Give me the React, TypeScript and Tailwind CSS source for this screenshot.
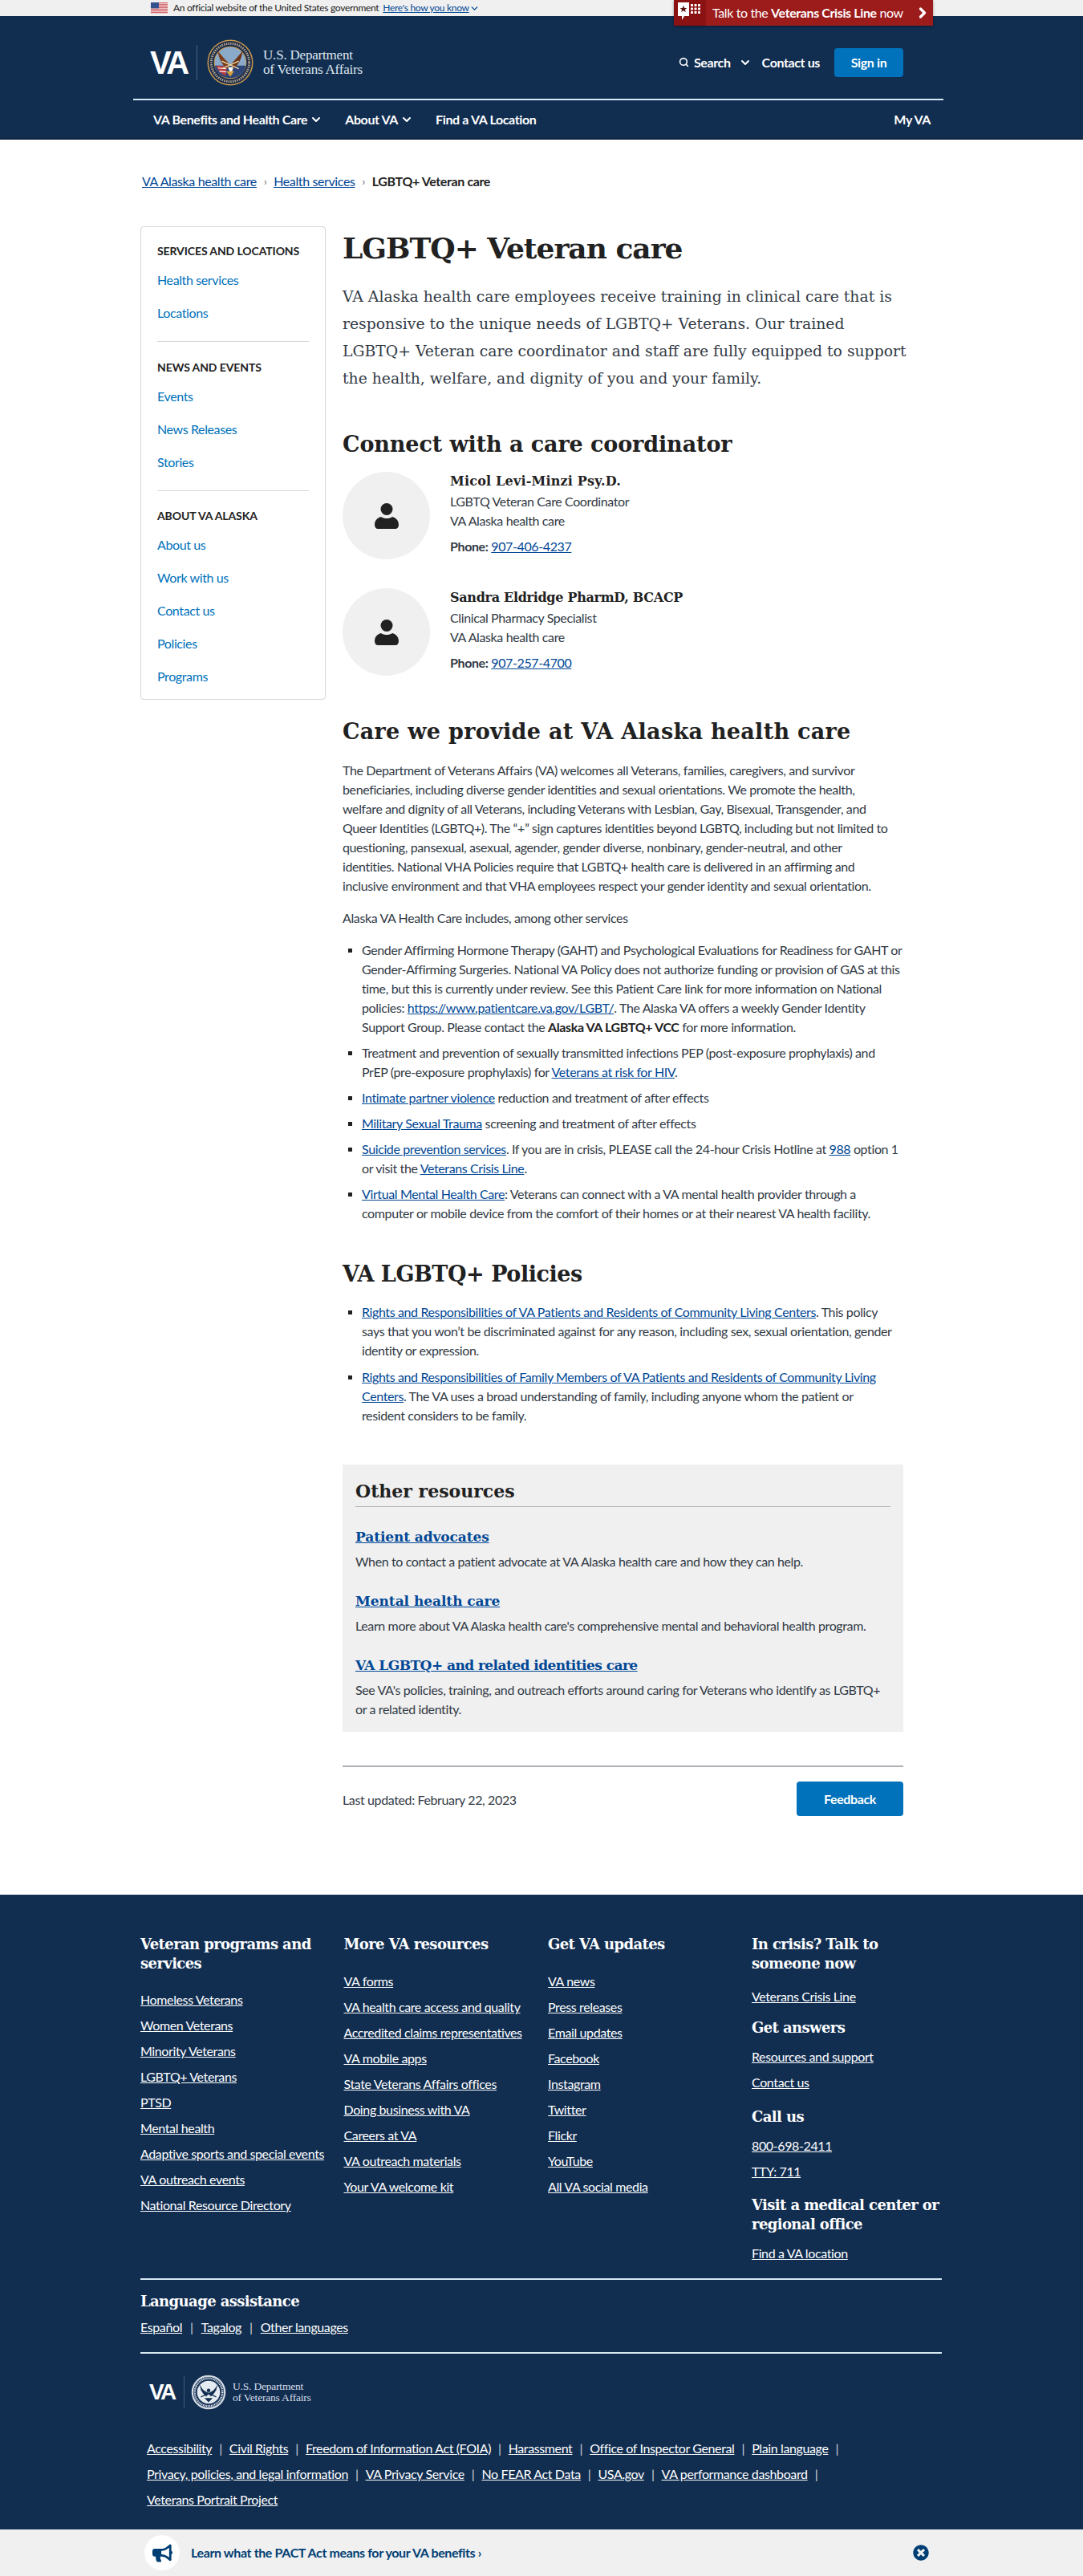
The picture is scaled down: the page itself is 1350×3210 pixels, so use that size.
import React from "react";
import { ChevronDown, ChevronRight, Search } from "lucide-react";
import { FaBullhorn, FaTimesCircle } from "react-icons/fa";

const A = ({ children, href = "#" }: { children: React.ReactNode; href?: string }) => (
  <a href={href} className="text-[#004795] underline">{children}</a>
);

const Flag = () => (
  <svg width="21" height="14" viewBox="0 0 21 14">
    <rect width="21" height="14" fill="#fff" />
    {[0, 2, 4, 6, 8, 10, 12].map((y) => (
      <rect key={y} y={y + 0.2} width="21" height="1.1" fill="#c8434a" />
    ))}
    <rect width="10" height="7.4" fill="#34508f" />
  </svg>
);

const Seal = ({ size, mono }: { size: number; mono?: boolean }) =>
  mono ? (
    <svg width={size} height={size} viewBox="0 0 60 60">
      <circle cx="30" cy="30" r="29" fill="#d4dbe4" />
      <circle cx="30" cy="30" r="26" fill="#112e51" />
      <circle cx="30" cy="30" r="23.5" fill="none" stroke="#dfe5ec" strokeWidth="3.4" strokeDasharray="1.6 1.2" />
      <circle cx="30" cy="30" r="19.5" fill="#e6ebf1" />
      <path d="M30 33C24 30 19 25 15 17c1 8 4 15 11 20zM30 33c6-3 11-8 15-16-1 8-4 15-11 20z" fill="#112e51" />
      <path d="M17 38l26-12M43 38L17 26" stroke="#112e51" strokeWidth="1.6" />
      <path d="M23 40h14l-7 7z" fill="#112e51" />
      <circle cx="30" cy="27" r="3" fill="#112e51" />
    </svg>
  ) : (
    <svg width={size} height={size} viewBox="0 0 60 60">
      <circle cx="30" cy="30" r="29.5" fill="#c99a4b" />
      <circle cx="30" cy="30" r="28" fill="#1c2c4c" />
      <circle cx="30" cy="30" r="24.5" fill="none" stroke="#b9a98c" strokeWidth="3" strokeDasharray="1.5 1.3" />
      <circle cx="30" cy="30" r="21" fill="#c99a4b" />
      <circle cx="30" cy="30" r="20" fill="#8ba9c9" />
      <path d="M10 34h40c-1 10-9 16-20 16s-19-6-20-16z" fill="#2e4677" />
      <path d="M12 34l14 1-2 12c-6-2-10-7-12-13z" fill="#b9383d" />
      <path d="M14 37l11 1M16 41l9 1" stroke="#fff" strokeWidth="1.2" />
      <path d="M30 33C25 28 20 22 14 15c1 9 5 18 12 23z" fill="#7c3f1d" />
      <path d="M30 33c5-5 10-11 16-18-1 9-5 18-12 23z" fill="#6d3518" />
      <path d="M19 38l22-10M41 38L19 28" stroke="#e8d9a8" strokeWidth="1.4" />
      <path d="M27 36h7l-3 9z" fill="#fff" />
      <path d="M25 41h10l-5 7z" fill="#d9a13b" />
    </svg>
  );

const Logo = ({ small }: { small?: boolean }) =>
  small ? (
    <div className="flex items-center h-[44px] ml-[11px] font-normal">
      <span className="text-white font-['Liberation_Sans',sans-serif] font-bold text-[28px] tracking-[-2.5px] leading-none w-[43px]">VA</span>
      <span className="w-px h-[40px] bg-[#3d5677]" />
      <span className="ml-[8px]"><Seal size={44} mono /></span>
      <span className="ml-[8px] text-[#d8dfe8] font-['Liberation_Serif',serif] text-[13.5px] leading-[14px] tracking-[-0.2px]">U.S. Department<br />of Veterans Affairs</span>
    </div>
  ) : (
    <div className="flex items-center h-[60px] font-normal">
      <span className="text-white font-['Liberation_Sans',sans-serif] font-bold text-[40px] tracking-[-3.5px] leading-none w-[58px]">VA</span>
      <span className="w-px h-[44px] bg-[#46607f]" />
      <span className="ml-[12px]"><Seal size={58} /></span>
      <span className="ml-[12px] text-[#dfe6ee] font-['Liberation_Serif',serif] text-[17px] leading-[18px] tracking-[-0.2px]">U.S. Department<br />of Veterans Affairs</span>
    </div>
  );

const SideHead = ({ children, mt }: { children: React.ReactNode; mt: string }) => (
  <div className={`${mt} h-[20px] leading-[20px] text-[14px] tracking-[-0.1px] font-bold uppercase text-[#212121] mb-[5px]`}>{children}</div>
);
const SideLink = ({ children }: { children: React.ReactNode }) => (
  <a href="#" className="block h-[41px] leading-[41px] text-[#0071bb]">{children}</a>
);

const Person = () => (
  <div className="w-[109px] h-[109px] rounded-full bg-[#f0f0f0] flex items-center justify-center shrink-0">
    <svg width="30" height="32" viewBox="0 0 30 32" fill="#212121">
      <circle cx="15" cy="7.5" r="7.5" />
      <path d="M0 27c0-6 4-9 8-10 2 1.400 4.500 2 7 2s5-.6 7-2c4 1 8 4 8 10 0 3-2 5-4 5H4c-2 0-4-2-4-5z" />
    </svg>
  </div>
);

const H = "font-['DejaVu_Serif',serif]";

const Contact = ({ name, role, phone, mt, nameTrack }: { name: string; role: string; phone: string; mt?: string; nameTrack: string }) => (
  <div className={`flex ${mt ?? ""}`}>
    <Person />
    <div className="ml-[25px] leading-[24px]">
      <div className={`${H} ${nameTrack} font-bold text-[16px] text-[#212121]`}>{name}</div>
      <div className="mt-px">{role}</div>
      <div>VA Alaska health care</div>
      <div className="mt-[8px]"><b>Phone:</b> <A>{phone}</A></div>
    </div>
  </div>
);

const Li = ({ children, mt = "mt-[8px]" }: { children: React.ReactNode; mt?: string }) => (
  <li className={`${mt} relative pl-[24px] whitespace-nowrap`}>
    <span className="absolute left-[7px] top-[10px] w-[5px] h-[5px] bg-[#212121]" />
    {children}
  </li>
);

const FootLink = ({ children }: { children: React.ReactNode }) => (
  <div className="h-[32px] leading-[32px]"><a href="#" className="text-white underline">{children}</a></div>
);
const FootHead = ({ children, mt = "" }: { children: React.ReactNode; mt?: string }) => (
  <div className={`${H} ${mt} text-white font-bold text-[18px] tracking-[-0.6px] leading-[24px] whitespace-pre`}>{children}</div>
);

const Sep = ({ wide }: { wide?: boolean }) => <span className={`${wide ? "mx-[10px]" : "mx-[9px]"} text-[#d6d7d9]`}>|</span>;

const Resource = ({ title, track, children }: { title: string; track: string; children: React.ReactNode }) => (
  <div className="mt-[25px]">
    <a href="#" className={`${H} ${track} block font-bold text-[17px] leading-[24px] text-[#004795] underline`}>{title}</a>
    <div className="mt-[7px] whitespace-nowrap">{children}</div>
  </div>
);

export default function App() {
  const col1 = ["Homeless Veterans", "Women Veterans", "Minority Veterans", "LGBTQ+ Veterans", "PTSD", "Mental health", "Adaptive sports and special events", "VA outreach events", "National Resource Directory"];
  const col2 = ["VA forms", "VA health care access and quality", "Accredited claims representatives", "VA mobile apps", "State Veterans Affairs offices", "Doing business with VA", "Careers at VA", "VA outreach materials", "Your VA welcome kit"];
  const col3 = ["VA news", "Press releases", "Email updates", "Facebook", "Instagram", "Twitter", "Flickr", "YouTube", "All VA social media"];
  return (
    <div className="w-[1350px] h-[3210px] overflow-hidden bg-white text-[#323a45] font-['Lato',sans-serif] text-[16px] tracking-[-0.38px] leading-[24px] relative">
      {/* official banner */}
      <div className="h-[20px] bg-[#f0f0f0] flex items-center pl-[188px] text-[12px] tracking-[-0.3px] leading-[20px] text-[#212121]">
        <Flag />
        <span className="ml-[7px]">An official website of the United States government</span>
        <a href="#" className="ml-[5px] text-[#004795] underline">Here's how you know</a>
        <ChevronDown size={13} strokeWidth={2.5} className="text-[#004795]" />
      </div>
      {/* crisis line, overlapping banner and header */}
      <a href="#" className="absolute left-[840px] top-0 w-[323px] h-[32px] bg-[#9c1c1c] flex items-center text-white shadow-[0_1px_3px_rgba(0,0,0,.4)] z-10">
        <span className="w-[40px] h-full bg-[#8b1212] flex items-center justify-center">
          <svg width="30" height="26" viewBox="0 0 30 26">
            <path d="M0 0h14v17H8l-3 5v-5H0z" fill="#fff" />
            <path d="M7 4l1.300 3h3l-2.400 2 1 3L7 10.200 4.100 12l1-3L2.700 7h3z" fill="#5b0e10" />
            {[16, 20.5, 25].map((x) => [2, 6.5, 11].map((y) => <rect key={`${x}-${y}`} x={x} y={y} width="3" height="3" rx=".6" fill="#fff" />))}
          </svg>
        </span>
        <span className="ml-[8px] whitespace-nowrap">Talk to the <b>Veterans Crisis Line</b> now</span>
        <ChevronRight size={20} strokeWidth={4} className="ml-[14px]" />
      </a>

      {/* header */}
      <header className="h-[154px] bg-[#112e51] border-b-[2px] border-[#0b2440] text-white font-bold">
        <div className="h-[103px] flex items-center pl-[187px] pr-[224px] pt-[12px]">
          <Logo />
          <div className="ml-auto flex items-center">
            <Search size={13} strokeWidth={3} />
            <span className="ml-[6px]">Search</span>
            <ChevronDown size={16} strokeWidth={3} className="ml-[10px]" />
            <span className="ml-[13px]">Contact us</span>
            <span className="ml-[18px] w-[86px] h-[36px] rounded-[4px] bg-[#0071bb] flex items-center justify-center">Sign in</span>
          </div>
        </div>
        <div className="ml-[166px] w-[1010px] h-[2px] bg-[#d7e9f3]" />
        <nav className="ml-[166px] w-[1010px] h-[47px] flex items-center pl-[25px] pr-[16px]">
          <span>VA Benefits and Health Care</span>
          <ChevronDown size={16} strokeWidth={3} className="ml-[3px]" />
          <span className="ml-[28px]">About VA</span>
          <ChevronDown size={16} strokeWidth={3} className="ml-[3px]" />
          <span className="ml-[28px]">Find a VA Location</span>
          <span className="ml-auto">My VA</span>
        </nav>
      </header>

      {/* breadcrumb */}
      <div className="ml-[177px] mt-[42px] h-[20px] leading-[20px] flex items-center">
        <A>VA Alaska health care</A>
        <span className="mx-[9px] text-[#5b616b] text-[13px]">›</span>
        <A>Health services</A>
        <span className="mx-[9px] text-[#5b616b] text-[13px]">›</span>
        <b className="text-[#212121]">LGBTQ+ Veteran care</b>
      </div>

      {/* main */}
      <div className="flex mt-[46px] ml-[175px]">
        <aside className="w-[231px] h-[590px] shrink-0 border border-[#d6d7d9] rounded-[4px] px-[20px] pt-[20px]">
          <SideHead mt="">Services and locations</SideHead>
          <SideLink>Health services</SideLink>
          <SideLink>Locations</SideLink>
          <div className="mt-[15px] h-px bg-[#d6d7d9]" />
          <SideHead mt="mt-[22px]">News and events</SideHead>
          <SideLink>Events</SideLink>
          <SideLink>News Releases</SideLink>
          <SideLink>Stories</SideLink>
          <div className="mt-[15px] h-px bg-[#d6d7d9]" />
          <SideHead mt="mt-[21px]">About VA Alaska</SideHead>
          <SideLink>About us</SideLink>
          <SideLink>Work with us</SideLink>
          <SideLink>Contact us</SideLink>
          <SideLink>Policies</SideLink>
          <SideLink>Programs</SideLink>
        </aside>

        <main className="ml-[21px] w-[699px] shrink-0">
          <h1 className={`${H} mt-[3px] font-bold text-[36px] tracking-[-1px] leading-[48px] text-[#212121]`}>LGBTQ+ Veteran care</h1>
          <p className={`${H} mt-[20px] text-[18.800px] tracking-normal leading-[34px] whitespace-nowrap`}>
            VA Alaska health care employees receive training in clinical care that is<br />
            responsive to the unique needs of LGBTQ+ Veterans. Our trained<br />
            LGBTQ+ Veteran care coordinator and staff are fully equipped to support<br />
            the health, welfare, and dignity of you and your family.
          </p>
          <h2 className={`${H} mt-[45px] font-bold text-[27px] tracking-[-0.1px] leading-[40px] text-[#212121]`}>Connect with a care coordinator</h2>
          <Contact mt="mt-[14px]" nameTrack="tracking-[0.2px]" name="Micol Levi-Minzi Psy.D." role="LGBTQ Veteran Care Coordinator" phone="907-406-4237" />
          <Contact mt="mt-[36px]" nameTrack="tracking-[-0.3px]" name="Sandra Eldridge PharmD, BCACP" role="Clinical Pharmacy Specialist" phone="907-257-4700" />

          <h2 className={`${H} mt-[50px] font-bold text-[27px] tracking-[0.3px] leading-[40px] text-[#212121]`}>Care we provide at VA Alaska health care</h2>
          <p className="mt-[16px] whitespace-nowrap">
            The Department of Veterans Affairs (VA) welcomes all Veterans, families, caregivers, and survivor<br />
            beneficiaries, including diverse gender identities and sexual orientations. We promote the health,<br />
            welfare and dignity of all Veterans, including Veterans with Lesbian, Gay, Bisexual, Transgender, and<br />
            Queer Identities (LGBTQ+).  The “+” sign captures identities beyond LGBTQ, including but not limited to<br />
            questioning, pansexual, asexual, agender, gender diverse, nonbinary, gender-neutral, and other<br />
            identities.  National VHA Policies require that LGBTQ+ health care is delivered in an affirming and<br />
            inclusive environment and that VHA employees respect your gender identity and sexual orientation.
          </p>
          <p className="mt-[16px]">Alaska VA Health Care includes, among other services</p>
          <ul className="mt-[16px]">
            <Li mt="">
              Gender Affirming Hormone Therapy (GAHT) and Psychological Evaluations for Readiness for GAHT or<br />
              Gender-Affirming Surgeries. National VA Policy does not authorize funding or provision of GAS at this<br />
              time, but this is currently under review. See this Patient Care link for more information on National<br />
              policies: <A>https://www.patientcare.va.gov/LGBT/</A>.  The Alaska VA offers a weekly Gender Identity<br />
              Support Group. Please contact the <b className="text-[#212121]">Alaska VA LGBTQ+ VCC</b> for more information.
            </Li>
            <Li>
              Treatment and prevention of sexually transmitted infections PEP (post-exposure prophylaxis) and<br />
              PrEP (pre-exposure prophylaxis) for <A>Veterans at risk for HIV</A>.
            </Li>
            <Li><A>Intimate partner violence</A> reduction and treatment of after effects</Li>
            <Li><A>Military Sexual Trauma</A> screening and treatment of after effects</Li>
            <Li>
              <A>Suicide prevention services</A>. If you are in crisis, PLEASE call the 24-hour Crisis Hotline at <A>988</A> option 1<br />
              or visit the <A>Veterans Crisis Line</A>.
            </Li>
            <Li>
              <A>Virtual Mental Health Care</A>: Veterans can connect with a VA mental health provider through a<br />
              computer or mobile device from the comfort of their homes or at their nearest VA health facility.
            </Li>
          </ul>

          <h2 className={`${H} mt-[44px] font-bold text-[27px] tracking-[-0.45px] leading-[40px] text-[#212121]`}>VA LGBTQ+ Policies</h2>
          <ul className="mt-[15px]">
            <Li mt="">
              <A>Rights and Responsibilities of VA Patients and Residents of Community Living Centers</A>. This policy<br />
              says that you won’t be discriminated against for any reason, including sex, sexual orientation, gender<br />
              identity or expression.
            </Li>
            <Li mt="mt-[9px]">
              <A>Rights and Responsibilities of Family Members of VA Patients and Residents of Community Living</A><br />
              <A>Centers</A>. The VA uses a broad understanding of family, including anyone whom the patient or<br />
              resident considers to be family.
            </Li>
          </ul>

          <section className="mt-[49px] h-[333px] bg-[#f0f0f0] px-[16px] pt-[17px]">
            <h3 className={`${H} font-bold text-[22px] tracking-normal leading-[32px] text-[#212121] pb-[3px] border-b border-[#aeb0b5]`}>Other resources</h3>
            <Resource track="tracking-[-0.1px]" title="Patient advocates">When to contact a patient advocate at VA Alaska health care and how they can help.</Resource>
            <Resource track="tracking-[-0.05px]" title="Mental health care">Learn more about VA Alaska health care's comprehensive mental and behavioral health program.</Resource>
            <Resource track="tracking-[-0.55px]" title="VA LGBTQ+ and related identities care">See VA's policies, training, and outreach efforts around caring for Veterans who identify as LGBTQ+<br />or a related identity.</Resource>
          </section>

          <div className="mt-[42px] h-[2px] bg-[#aeb0b5]" />
          <div className="mt-[18px] flex items-center justify-between">
            <span className="mt-[3px]">Last updated: February 22, 2023</span>
            <button className="w-[133px] h-[43px] rounded-[4px] bg-[#0071bb] text-white font-bold">Feedback</button>
          </div>
        </main>
      </div>

      {/* footer */}
      <footer className="absolute left-0 right-0 top-[2361px] h-[791px] bg-[#112e51] text-white pl-[175px] pt-[50px]">
        <div className="w-[1000px] h-[428px] grid grid-cols-[253.500px_254.500px_254px_238px]">
          <div>
            <FootHead>{"Veteran programs and\nservices"}</FootHead>
            <div className="mt-[17px]">{col1.map((t) => <FootLink key={t}>{t}</FootLink>)}</div>
          </div>
          <div>
            <FootHead>More VA resources</FootHead>
            <div className="mt-[18px]">{col2.map((t) => <FootLink key={t}>{t}</FootLink>)}</div>
          </div>
          <div>
            <FootHead>Get VA updates</FootHead>
            <div className="mt-[18px]">{col3.map((t) => <FootLink key={t}>{t}</FootLink>)}</div>
          </div>
          <div>
            <FootHead>{"In crisis? Talk to\nsomeone now"}</FootHead>
            <div className="mt-[13px]"><FootLink>Veterans Crisis Line</FootLink></div>
            <FootHead mt="mt-[11px]">Get answers</FootHead>
            <div className="mt-[8px]"><FootLink>Resources and support</FootLink><FootLink>Contact us</FootLink></div>
            <FootHead mt="mt-[15px]">Call us</FootHead>
            <div className="mt-[8px]"><FootLink>800-698-2411</FootLink><FootLink>TTY: 711</FootLink></div>
            <FootHead mt="mt-[14px]">{"Visit a medical center or\nregional office"}</FootHead>
            <div className="mt-[8px]"><FootLink>Find a VA location</FootLink></div>
          </div>
        </div>
        <div className="w-[999px] h-[2px] bg-[#d7e9f3]" />
        <FootHead mt="mt-[15px]">Language assistance</FootHead>
        <div className="mt-[8px] h-[24px] leading-[24px]">
          <a href="#" className="underline">Español</a><Sep wide /><a href="#" className="underline">Tagalog</a><Sep wide /><a href="#" className="underline">Other languages</a>
        </div>
        <div className="mt-[19px] w-[999px] h-[2px] bg-[#d7e9f3]" />
        <div className="mt-[26px]"><Logo small /></div>
        <div className="mt-[32px] ml-[8px] leading-[32px] whitespace-nowrap">
          <a href="#" className="underline">Accessibility</a><Sep /><a href="#" className="underline">Civil Rights</a><Sep /><a href="#" className="underline">Freedom of Information Act (FOIA)</a><Sep /><a href="#" className="underline">Harassment</a><Sep /><a href="#" className="underline">Office of Inspector General</a><Sep /><a href="#" className="underline">Plain language</a><Sep /><br />
          <a href="#" className="underline">Privacy, policies, and legal information</a><Sep /><a href="#" className="underline">VA Privacy Service</a><Sep /><a href="#" className="underline">No FEAR Act Data</a><Sep /><a href="#" className="underline">USA.gov</a><Sep /><a href="#" className="underline">VA performance dashboard</a><Sep /><br />
          <a href="#" className="underline">Veterans Portrait Project</a>
        </div>
      </footer>

      {/* promo bar */}
      <div className="absolute left-0 right-0 top-[3152px] h-[58px] bg-[#f0f0f0] flex items-center pl-[180px]">
        <span className="w-[44px] h-[44px] rounded-full bg-white flex items-center justify-center">
          <FaBullhorn size={25} className="text-[#003e73]" />
        </span>
        <a href="#" className="ml-[14px] font-bold text-[#003e73]">Learn what the PACT Act means for your VA benefits ›</a>
        <FaTimesCircle size={20} className="absolute left-[1138px] top-[19px] text-[#003e73]" />
      </div>
    </div>
  );
}
